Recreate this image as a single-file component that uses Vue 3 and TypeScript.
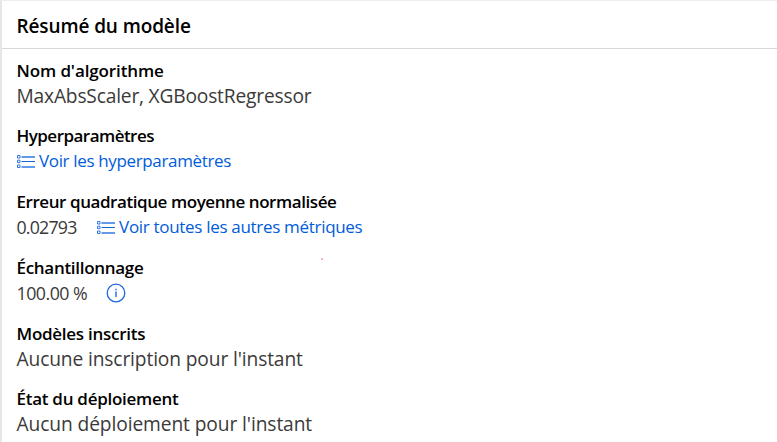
<script setup lang="ts">
interface Field {
  id: string
  label: string
  value?: string
  large?: boolean
  link?: string
  info?: boolean
}

const fields: Field[] = [
  { id: 'algorithm', label: "Nom d'algorithme", value: 'MaxAbsScaler, XGBoostRegressor', large: true },
  { id: 'hyper', label: 'Hyperparamètres', link: 'Voir les hyperparamètres' },
  { id: 'error', label: 'Erreur quadratique moyenne normalisée', value: '0.02793', link: 'Voir toutes les autres métriques' },
  { id: 'sampling', label: 'Échantillonnage', value: '100.00 %', info: true },
  { id: 'models', label: 'Modèles inscrits', value: "Aucune inscription pour l'instant", large: true },
  { id: 'deploy', label: 'État du déploiement', value: "Aucun déploiement pour l'instant", large: true },
]
</script>

<template>
  <section class="card">
    <header class="head"><h2 class="title">Résumé du modèle</h2></header>
    <dl class="fields">
      <div v-for="f in fields" :key="f.id" class="field" :class="f.id">
        <dt class="label">{{ f.label }}</dt>
        <dd class="content">
          <span v-if="f.value" class="value" :class="{ large: f.large }">{{ f.value }}</span>
          <a v-if="f.link" class="link">
            <svg class="list" width="18" height="13" viewBox="0 0 18 13" fill="none" stroke="#3577df">
              <path d="M.5 .5h2.5v2.5h-2.5zM.5 5.2h2.5v2.5h-2.5zM.5 10h2.5v2.5h-2.5z" />
              <path d="M4.5 2h13.5M4.5 12h13.5" stroke="#639bea" stroke-width="2" />
              <path d="M4.5 6.5h13.5" stroke="#1763dc" />
            </svg>
            <span class="link-text">{{ f.link }}</span>
          </a>
          <svg v-if="f.info" class="info" width="20" height="20" viewBox="0 0 20 20" fill="none" stroke="#2169de">
            <circle cx="10" cy="10" r="8.8" stroke-width="1.3" />
            <path d="M10 8.5v5.5M10 5.7v1.5" stroke-width="1.4" />
          </svg>
        </dd>
      </div>
    </dl>
    <i class="speck"></i>
  </section>
</template>

<style>
body { margin: 0; overflow: hidden; background: #fff; }
</style>

<style scoped>
.card {
  position: relative;
  box-sizing: border-box;
  height: 442px;
  overflow: hidden;
  border-top: 1px solid #eee;
  border-left: 2px solid #e6e6e6;
  font-family: "Open Sans", "Noto Sans", sans-serif;
  color: #000;
}
.head {
  box-sizing: border-box;
  height: 48px;
  padding: 12px 14.5px 0;
  border-bottom: 1px solid #d8d8d8;
}
.title { margin: 0; font-size: 19px; line-height: 26px; font-weight: 600; letter-spacing: -.11px; white-space: nowrap; }
.fields { display: flex; flex-direction: column; gap: 14px; margin: 0; padding: 9px 15px 0 14.5px; }
.field { height: 52px; white-space: nowrap; }
.algorithm, .deploy { height: 51px; }
.models { height: 51px; }
.label { height: 25px; font-size: 17px; line-height: 26px; font-weight: 600; }
.content { display: flex; align-items: center; height: 26px; margin: 0; color: #3b3a39; font-size: 17px; line-height: 26px; }
.value { font-size: 17.8px; }
.value.large { font-size: 19.2px; }
.link { display: flex; align-items: center; gap: 4.5px; color: #015cda; }
.list { flex: none; }
.value + .link { margin-left: 20px; }
.info { flex: none; margin-left: 19px; }
.algorithm .label { letter-spacing: -.11px; }
.algorithm .value { letter-spacing: -.19px; }
.hyper .label { letter-spacing: -.53px; }
.hyper .link-text { letter-spacing: -.35px; }
.error .label { letter-spacing: -.43px; }
.error .value { letter-spacing: -.8px; }
.error .link-text { letter-spacing: -.31px; }
.sampling .label { letter-spacing: -.3px; }
.sampling .value { letter-spacing: -.5px; }
.models .label { letter-spacing: -.27px; }
.models .value { letter-spacing: -.13px; }
.deploy .label { letter-spacing: -.27px; }
.deploy .value { letter-spacing: -.1px; }
.speck { position: absolute; left: 319px; top: 257px; width: 2px; height: 2px; background: #f3b6be; }
</style>
